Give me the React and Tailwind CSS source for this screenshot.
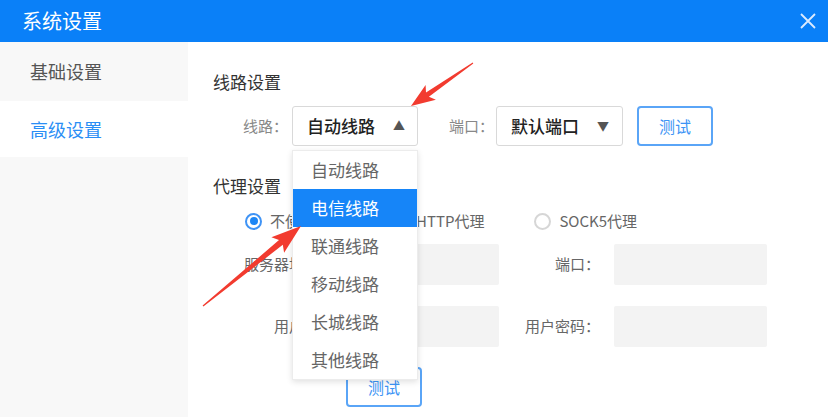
import React from 'react';

const FONT = { fontFamily: '"Noto Sans CJK SC", "Noto Sans", sans-serif' };

const LINES = ['自动线路', '电信线路', '联通线路', '移动线路', '长城线路', '其他线路'];

// 箭头多边形
const arrowPoints = (x1, y1, x2, y2, headLen, headW, shaftW) => {
  const dx = x2 - x1;
  const dy = y2 - y1;
  const len = Math.hypot(dx, dy);
  const ux = dx / len;
  const uy = dy / len;
  const nx = -uy;
  const ny = ux;
  const bx = x2 - ux * headLen;
  const by = y2 - uy * headLen;
  const wx = x2 - ux * (headLen + 4);
  const wy = y2 - uy * (headLen + 4);
  const pts = [
    [x1 + nx * 0.6, y1 + ny * 0.6],
    [bx + nx * shaftW, by + ny * shaftW],
    [wx + nx * headW, wy + ny * headW],
    [x2, y2],
    [wx - nx * headW, wy - ny * headW],
    [bx - nx * shaftW, by - ny * shaftW],
    [x1 - nx * 0.6, y1 - ny * 0.6],
  ];
  return pts.map(p => p.map(v => v.toFixed(1)).join(',')).join(' ');
};

const Radio = ({ checked, label, className }) => (
  <label className={`flex items-center gap-[8px] ${className || ''}`}>
    {checked ? (
      <span className="w-[17px] h-[17px] rounded-full border-2 border-[#3f93f5] flex items-center justify-center">
        <span className="w-[8px] h-[8px] rounded-full bg-[#1d86f5]" />
      </span>
    ) : (
      <span className="w-[17px] h-[17px] rounded-full border-2 border-[#d6d6d6]" />
    )}
    <span className="text-[15px] text-[#666]">{label}</span>
  </label>
);

const App = () => {
  return (
    <div className="relative w-[828px] h-[417px] overflow-hidden bg-white" style={FONT}>
      <div className="h-[42px] bg-[#0a80f8] flex items-center justify-between pl-[22px] pr-[11px]">
        <span className="text-[20px] text-white">系统设置</span>
        <svg width="16" height="16" viewBox="0 0 16 16" className="mr-[1px]">
          <path d="M1 1 L15 15 M15 1 L1 15" stroke="#dbeafe" strokeWidth="1.8" fill="none" />
        </svg>
      </div>

      <div className="flex h-[375px]">
        <div className="w-[188px] bg-[#f8f8f8]">
          <div className="h-[59px] flex items-center pl-[30px] text-[18px] text-[#555]">基础设置</div>
          <div className="h-[56px] flex items-center pl-[30px] text-[18px] text-[#2a8ef5] bg-white">高级设置</div>
        </div>

        <div className="flex-1 pl-[25px] pt-[27px] flex flex-col">
          <div className="text-[17px] leading-[26px] text-[#333]">线路设置</div>

          <div className="mt-[11px] flex items-center h-[40px]">
            <span className="ml-[30px] w-[49px] text-[15px] text-[#888]">线路：</span>
            <div className="relative">
              <div className="w-[126px] h-[40px] border border-[#d9d9d9] rounded-[3px] flex items-center justify-between pl-[14px] pr-[12px]">
                <span className="text-[17px] font-medium text-[#222]">自动线路</span>
                <span className="text-[12px] text-[#555]">▲</span>
              </div>
              <div className="absolute z-10 left-0 top-[44px] w-[126px] bg-white border border-[#ececec] shadow-[0_2px_6px_rgba(0,0,0,0.12)] flex flex-col">
                {LINES.map((l, i) => (
                  <div
                    key={l}
                    className={
                      i === 1
                        ? 'h-[38px] flex items-center pl-[18px] text-[17px] bg-[#1685f8] text-white'
                        : 'h-[38px] flex items-center pl-[18px] text-[17px] text-[#666]'
                    }
                  >
                    {l}
                  </div>
                ))}
              </div>
            </div>
            <span className="ml-[31px] w-[47px] text-[15px] text-[#888]">端口：</span>
            <div className="w-[127px] h-[40px] border border-[#d9d9d9] rounded-[3px] flex items-center justify-between pl-[14px] pr-[13px]">
              <span className="text-[17px] font-medium text-[#222]">默认端口</span>
              <span className="text-[12px] text-[#555]">▼</span>
            </div>
            <button className="ml-[14px] w-[76px] h-[40px] border-2 border-[#5aa5f7] rounded-[4px] text-[16px] text-[#3d94f5]">测试</button>
          </div>

          <div className="mt-[27px] text-[17px] leading-[26px] text-[#333]">代理设置</div>

          <div className="mt-[12px] ml-[32px] flex items-center h-[20px]">
            <Radio checked label="不使用代理" />
            <Radio label="HTTP代理" className="ml-[46px]" />
            <Radio label="SOCK5代理" className="ml-[50px]" />
          </div>

          <div className="mt-[13px] flex flex-col gap-[21px]">
            <div className="flex items-center h-[41px]">
              <span className="w-[121px] text-right text-[15px] text-[#666]">服务器地址：</span>
              <div className="ml-[12px] w-[153px] h-[41px] bg-[#f3f3f3] rounded-[2px]" />
              <span className="w-[101px] text-right text-[15px] text-[#666]">端口：</span>
              <div className="ml-[14px] w-[153px] h-[41px] bg-[#f3f3f3] rounded-[2px]" />
            </div>
            <div className="flex items-center h-[41px]">
              <span className="w-[121px] text-right text-[15px] text-[#666]">用户名：</span>
              <div className="ml-[12px] w-[153px] h-[41px] bg-[#f3f3f3] rounded-[2px]" />
              <span className="w-[101px] text-right text-[15px] text-[#666]">用户密码：</span>
              <div className="ml-[14px] w-[153px] h-[41px] bg-[#f3f3f3] rounded-[2px]" />
            </div>
          </div>

          <button className="mt-[20px] ml-[133px] w-[76px] h-[40px] border-2 border-[#5aa5f7] rounded-[4px] text-[16px] text-[#3d94f5]">测试</button>
        </div>
      </div>

      <svg className="absolute inset-0 z-20 pointer-events-none" width="828" height="417">
        <polygon points={arrowPoints(473, 63, 411, 106, 20, 9, 2.5)} fill="#f23b2f" />
        <polygon points={arrowPoints(203, 306, 301, 226, 26, 10, 3)} fill="#f23b2f" />
      </svg>
    </div>
  );
};

export default App;
